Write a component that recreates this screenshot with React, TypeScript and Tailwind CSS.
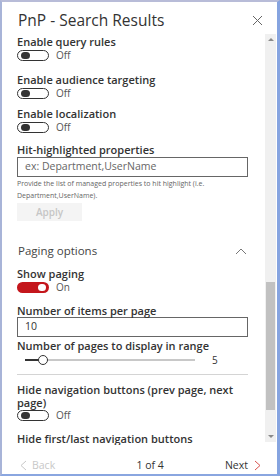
import React from "react";

const font = { fontFamily: '"Open Sans", "Noto Sans", sans-serif' };

function Toggle({ on, label, className = "mt-[2px]" }: { on?: boolean; label: string; className?: string }) {
  return (
    <div className={`flex items-center h-[11px] ${className}`}>
      {on ? (
        <div className="w-[32px] h-[11px] rounded-full bg-[#c4161c] flex items-center justify-end pr-[3px]">
          <div className="w-[8px] h-[7px] rounded-full bg-white" />
        </div>
      ) : (
        <div className="w-[32px] h-[11px] rounded-full border border-[#333] flex items-center pl-[3px]">
          <div className="w-[9px] h-[7px] rounded-full bg-[#333]" />
        </div>
      )}
      <span className="ml-[7px] text-[10px] leading-[11px] text-[#555]">{label}</span>
    </div>
  );
}

function Label({ children, className = "" }: { children: React.ReactNode; className?: string }) {
  return (
    <div className={`text-[11px] leading-[13px] font-semibold text-[#333] ${className}`}>{children}</div>
  );
}

export default function App() {
  return (
    <div
      style={font}
      className="w-[280px] h-[476px] bg-white border-t-2 border-l-2 border-r-[3px] border-b-2 border-t-[#b8bcd8] border-l-[#a8b4d8] border-r-[#86a4e0] border-b-[#8aa6e0] flex flex-col overflow-hidden"
    >
      {/* Header */}
      <div className="h-[32px] flex items-center justify-between pl-[16px] pr-[14px] shrink-0">
        <div className="text-[15.5px] leading-[18px] text-[#333] mt-[4px]">PnP - Search Results</div>
        <svg width="11" height="11" viewBox="0 0 11 11" className="mt-[4px]">
          <path d="M1 1 L10 10 M10 1 L1 10" stroke="#666" strokeWidth="1" />
        </svg>
      </div>

      {/* Body */}
      <div className="flex flex-1 min-h-0">
        <div className="flex-1 overflow-hidden pl-[15px] pr-[17px]">
          <Label className="mt-[1px]">Enable query rules</Label>
          <Toggle label="Off" />
          <Label className="mt-[12px]">Enable audience targeting</Label>
          <Toggle label="Off" />
          <Label className="mt-[8px]">Enable localization</Label>
          <Toggle label="Off" />
          <Label className="mt-[10px]">Hit-highlighted properties</Label>
          <div className="mt-[1px] h-[20px] border border-[#666] flex items-center pl-[7px] text-[10.5px] text-[#666]">
            ex: Department,UserName
          </div>
          <div className="mt-[1px] text-[7px] leading-[12px] text-[#666]">
            Provide the list of managed properties to hit highlight (i.e.
            <br />
            Department,UserName).
          </div>
          <div className="mt-[1px] w-[65px] h-[18px] bg-[#f4f4f4] flex items-center justify-center text-[10px] font-semibold text-[#c6c6c6]">
            Apply
          </div>

          <div className="mt-[23px] flex items-center justify-between">
            <div className="text-[11.5px] leading-[14px] text-[#444] pl-[1px]">Paging options</div>
            <svg width="12" height="7" viewBox="0 0 12 7" className="mr-[1px]">
              <path d="M1 6 L6 1 L11 6" stroke="#777" strokeWidth="1" fill="none" />
            </svg>
          </div>
          <Label className="mt-[9px]">Show paging</Label>
          <Toggle on label="On" />
          <Label className="mt-[11px]">Number of items per page</Label>
          <div className="mt-0 h-[20px] border border-[#666] flex items-center pl-[7px] text-[10.5px] text-[#333]">
            10
          </div>
          <Label className="mt-[2px]">Number of pages to display in range</Label>
          <div className="mt-[1px] h-[14px] flex items-center">
            <div className="relative ml-[8px] w-[170px] h-[2px] bg-[#c8c8c8]">
              <div className="absolute left-0 top-0 h-[2px] w-[16px] bg-[#333]" />
              <div className="absolute left-[13px] top-[-4px] w-[10px] h-[10px] rounded-full border border-[#333] bg-white" />
            </div>
            <span className="ml-[17px] text-[10px] text-[#333]">5</span>
          </div>
          <div className="mt-[7px] h-px bg-[#d4d4d4]" />
          <Label className="mt-[8px]">
            Hide navigation buttons (prev page, next
            <br />
            page)
          </Label>
          <Toggle label="Off" className="mt-[1px]" />
          <Label className="mt-[11px]">Hide first/last navigation buttons</Label>
        </div>

        {/* Scrollbar */}
        <div className="w-[11px] mr-[1px] bg-[#f0f0f0] flex flex-col items-center mb-[3px]">
          <div className="h-[11px] flex items-center justify-center">
            <div className="w-0 h-0 border-l-[3px] border-r-[3px] border-b-[3px] border-l-transparent border-r-transparent border-b-[#8a8a8a]" />
          </div>
          <div className="mt-[237px] w-[9px] h-[128px] bg-[#c1c1c1]" />
          <div className="flex-1" />
          <div className="h-[11px] flex items-center justify-center">
            <div className="w-0 h-0 border-l-[3px] border-r-[3px] border-t-[3px] border-l-transparent border-r-transparent border-t-[#8a8a8a]" />
          </div>
        </div>
      </div>

      {/* Footer */}
      <div className="h-[29px] shrink-0 flex items-center justify-between pt-[11px] pl-[18px] pr-[16px] text-[10.5px] leading-[14px]">
        <div className="flex items-center text-[#c8c8c8]">
          <svg width="7" height="11" viewBox="0 0 7 11" className="mr-[5px]">
            <path d="M6 1 L1 5.5 L6 10" stroke="#c8c8c8" strokeWidth="1" fill="none" />
          </svg>
          Back
        </div>
        <div className="text-[#333] ml-[20px]">1 of 4</div>
        <div className="flex items-center text-[#333]">
          Next
          <svg width="7" height="11" viewBox="0 0 7 11" className="ml-[6px]">
            <path d="M1 1 L6 5.5 L1 10" stroke="#d9534f" strokeWidth="1" fill="none" />
          </svg>
        </div>
      </div>
    </div>
  );
}
